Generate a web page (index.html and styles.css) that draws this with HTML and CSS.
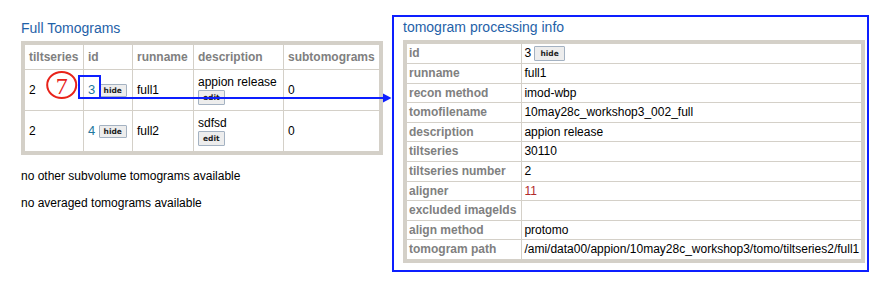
FILE: index.html
```html
<!DOCTYPE html>
<html lang="en">

<head>
    <meta charset="UTF-8">
    <title>Tomograms</title>
    <link rel="stylesheet" href="styles.css">
</head>

<body>
    <div class="page">
        <div class="left-col">
            <h2 class="title">Full Tomograms</h2>
            <table class="tomo-table">
                <tr>
                    <th class="c-tilt">tiltseries</th>
                    <th class="c-id">id</th>
                    <th class="c-run">runname</th>
                    <th class="c-desc">description</th>
                    <th class="c-sub">subtomograms</th>
                </tr>
                <tr>
                    <td>2</td>
                    <td><a class="id-link" href="#">3</a> <button class="small-btn">hide</button></td>
                    <td>full1</td>
                    <td class="desc">appion release<br><button class="small-btn">edit</button></td>
                    <td>0</td>
                </tr>
                <tr>
                    <td>2</td>
                    <td><a class="id-link" href="#">4</a> <button class="small-btn">hide</button></td>
                    <td>full2</td>
                    <td class="desc">sdfsd<br><button class="small-btn">edit</button></td>
                    <td>0</td>
                </tr>
            </table>
            <p class="note">no other subvolume tomograms available</p>
            <p class="note">no averaged tomograms available</p>
        </div>

        <div class="info-box">
            <h2 class="title">tomogram processing info</h2>
            <table class="info-table">
                <tr><th>id</th><td class="id-val">3 <button class="small-btn big">hide</button></td></tr>
                <tr><th>runname</th><td>full1</td></tr>
                <tr><th>recon method</th><td>imod-wbp</td></tr>
                <tr><th>tomofilename</th><td>10may28c_workshop3_002_full</td></tr>
                <tr><th>description</th><td>appion release</td></tr>
                <tr><th>tiltseries</th><td>30110</td></tr>
                <tr><th>tiltseries number</th><td>2</td></tr>
                <tr><th>aligner</th><td class="aligner">11</td></tr>
                <tr><th>excluded imageIds</th><td></td></tr>
                <tr><th>align method</th><td>protomo</td></tr>
                <tr><th>tomogram path</th><td>/ami/data00/appion/10may28c_workshop3/tomo/tiltseries2/full1</td></tr>
            </table>
        </div>
    </div>

    <svg class="marks" width="886" height="287" viewBox="0 0 886 287">
        <ellipse cx="61.7" cy="85" rx="14.5" ry="13" fill="none" stroke="#e8231a" stroke-width="2" />
        <text x="61.7" y="93.5" text-anchor="middle" class="mark-num">7</text>
        <rect x="79" y="76" width="21" height="22" fill="none" stroke="#0d1fff" stroke-width="2" />
        <line x1="100" y1="98" x2="385" y2="98" stroke="#0d1fff" stroke-width="2" />
        <polygon points="383,93.5 391.5,98 383,102.5" fill="#0d1fff" />
    </svg>
</body>

</html>
```

FILE: styles.css
```css
body {
    margin: 0;
    font-family: "Liberation Sans", Arial, sans-serif;
    font-size: 12px;
    color: #000;
    background: #fff;
    position: relative;
}

.page {
    display: flex;
    align-items: flex-start;
    padding: 15px 0 0 21px;
}

.left-col {
    width: 362px;
    padding-top: 5px;
}

.title {
    margin: 0 0 4px 0;
    font-size: 14px;
    line-height: 17px;
    font-weight: normal;
    color: #1f62a8;
}

.tomo-table,
.info-table {
    border-collapse: collapse;
    border: 4px solid #d4d0c8;
}

.tomo-table {
    width: 362px;
}

.tomo-table th,
.tomo-table td,
.info-table th,
.info-table td {
    border: 1px solid #d4d0c8;
    text-align: left;
}

.tomo-table th {
    padding: 5px 4px 5px;
    line-height: 14px;
    color: #808080;
    font-weight: bold;
}

.tomo-table td {
    padding: 5px 4px 5px;
    line-height: 14px;
    vertical-align: middle;
}

.c-tilt { width: 50px; }
.c-id { width: 40px; }
.c-run { width: 52px; }
.c-desc { width: 81px; }

.id-link {
    color: #23789e;
    text-decoration: none;
    font-size: 13px;
}

.small-btn {
    font-family: "DejaVu Sans", sans-serif;
    font-size: 7.5px;
    font-weight: bold;
    color: #222;
    background: #ededed;
    border: 1px solid #a4b2c2;
    border-radius: 1px;
    padding: 1px 4px;
    line-height: 9px;
    margin: 0;
    vertical-align: middle;
}

.desc .small-btn {
    margin-top: 1px;
    padding: 2px 4px;
}

.small-btn.big {
    padding: 2px 5px;
    vertical-align: top;
}

.note {
    margin: 14px 0 0;
    line-height: 14px;
}

.note + .note {
    margin-top: 13px;
}

.info-box {
    margin-left: 9px;
    border: 2px solid #0d1fff;
    padding: 2px 7px 7px 9px;
    width: 457px;
}

.info-table {
    width: 457px;
}

.info-table th,
.info-table td {
    padding: 2px;
    line-height: 14.6px;
}

.info-table th {
    padding-right: 5px;
    color: #808080;
    font-weight: bold;
    white-space: nowrap;
    width: 1%;
}

.id-val {
    vertical-align: top;
}

.aligner {
    color: #b02a2a;
}

.marks {
    position: absolute;
    top: 0;
    left: 0;
    pointer-events: none;
}

.mark-num {
    font-family: "Liberation Serif", serif;
    font-size: 24px;
    fill: #e8231a;
}
```
